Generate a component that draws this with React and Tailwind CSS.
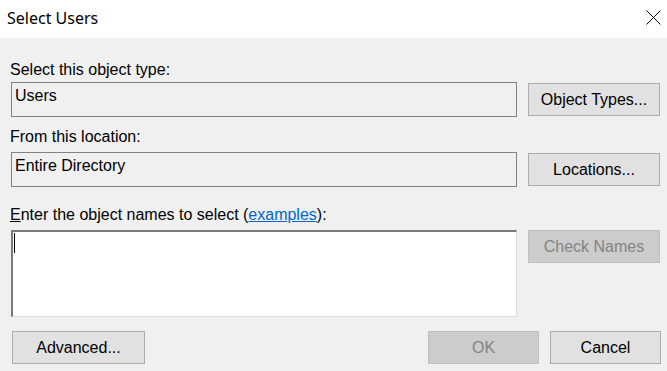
export default function App() {
  const btn =
    'flex items-center justify-center h-[33px] border border-[#adadad] bg-[#e1e1e1] text-[16px] text-black';
  const btnOff =
    'flex items-center justify-center h-[33px] border border-[#bfbfbf] bg-[#cccccc] text-[16px] text-[#838383]';

  return (
    <div className="w-[667px] h-[371px] bg-[#f0f0f0] overflow-hidden font-['Liberation_Sans',Arial,sans-serif] text-black">
      {/* Title bar */}
      <div className="h-[38px] bg-white flex items-center justify-between pl-[7px] pr-[6px]">
        <span className="text-[16px] font-['Noto_Sans',sans-serif] leading-none pb-[2px] text-[#000]">Select Users</span>
        <svg width="15" height="15" viewBox="0 0 15 15" className="mb-[3px]">
          <path d="M0.5 0.5 L14.5 14.5 M14.5 0.5 L0.5 14.5" stroke="#000" strokeWidth="1" fill="none" />
        </svg>
      </div>

      {/* Object type */}
      <div className="mt-[23px] pl-[10px] h-[18px] leading-[18px] text-[16px]">Select this object type:</div>
      <div className="mt-[3px] flex items-center pl-[11px]">
        <div className="w-[506px] h-[35px] border border-[#828282] bg-[#f0f0f0] pl-[3px] pt-[4px] text-[16px] leading-[18px]">
          Users
        </div>
        <button className={`${btn} ml-[11px] w-[132px]`}>Object Types...</button>
      </div>

      {/* Location */}
      <div className="mt-[11px] pl-[10px] h-[18px] leading-[18px] text-[16px]">From this location:</div>
      <div className="mt-[6px] flex items-center pl-[11px]">
        <div className="w-[506px] h-[35px] border border-[#828282] bg-[#f0f0f0] pl-[3px] pt-[4px] text-[16px] leading-[18px]">
          Entire Directory
        </div>
        <button className={`${btn} ml-[11px] w-[132px]`}>Locations...</button>
      </div>

      {/* Names */}
      <div className="mt-[19px] pl-[10px] h-[18px] leading-[18px] text-[16px]">
        <span className="underline">E</span>nter the object names to select (
        <span className="text-[#0066cc] underline">examples</span>):
      </div>
      <div className="mt-[6px] flex items-start pl-[11px]">
        <div className="w-[506px] h-[87px] bg-white border-l-2 border-t-2 border-l-[#7a7a7a] border-t-[#7a7a7a] border-r border-b border-r-[#dcdcdc] border-b-[#dcdcdc] pl-[1px] pt-[1px]">
          <div className="w-[1px] h-[20px] bg-black" />
        </div>
        <button className={`${btnOff} ml-[11px] w-[132px]`}>Check Names</button>
      </div>

      {/* Bottom buttons */}
      <div className="mt-[14px] flex items-center pl-[12px]">
        <button className={`${btn} w-[133px]`}>Advanced...</button>
        <button className={`${btnOff} ml-[283px] w-[111px]`}>OK</button>
        <button className={`${btn} ml-[11px] w-[111px]`}>Cancel</button>
      </div>
    </div>
  );
}
